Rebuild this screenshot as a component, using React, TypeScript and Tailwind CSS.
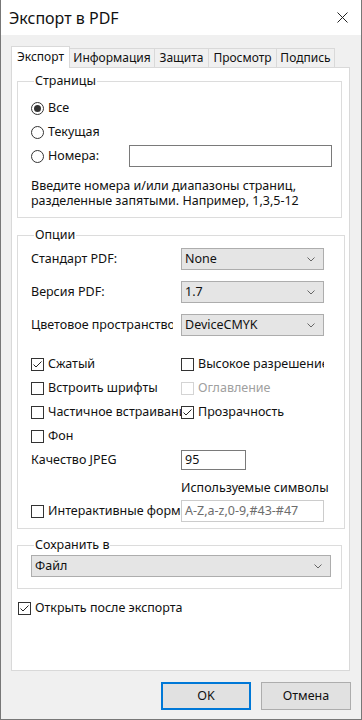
import React from "react";

const Chevron = () => (
  <svg width="8" height="5" viewBox="0 0 8 5" className="shrink-0">
    <path d="M0.5 0.5 L4 4 L7.5 0.5" fill="none" stroke="#666" strokeWidth="1" />
  </svg>
);

const Select = ({ value, className = "" }: { value: string; className?: string }) => (
  <div
    className={
      "h-[22px] bg-[#e5e5e5] border border-[#adadad] flex items-center justify-between pl-[3px] pr-[8px] " +
      className
    }
  >
    <span className="whitespace-nowrap">{value}</span>
    <Chevron />
  </div>
);

const Radio = ({ checked, label }: { checked?: boolean; label: string }) => (
  <div className="flex items-center gap-[4px]">
    <div className="w-[13px] h-[13px] rounded-full border border-[#333] flex items-center justify-center shrink-0 bg-white">
      {checked && <div className="w-[7px] h-[7px] rounded-full bg-[#333]" />}
    </div>
    <span className="whitespace-nowrap">{label}</span>
  </div>
);

const Check = ({
  checked,
  disabled,
  label,
  className = "",
}: {
  checked?: boolean;
  disabled?: boolean;
  label: string;
  className?: string;
}) => (
  <div className={"flex items-center gap-[4px] h-[24px] overflow-hidden " + className}>
    <div
      className={
        "w-[13px] h-[13px] border shrink-0 bg-white flex items-center justify-center " +
        (disabled ? "border-[#d4d4d4]" : "border-[#333]")
      }
    >
      {checked && (
        <svg width="11" height="11" viewBox="0 0 11 11">
          <path d="M1.5 5.5 L4 8 L9.5 2.5" fill="none" stroke="#222" strokeWidth="1" />
        </svg>
      )}
    </div>
    <span className={"whitespace-nowrap " + (disabled ? "text-[#a0a0a0]" : "")}>{label}</span>
  </div>
);

export default function App() {
  return (
    <div className="w-[362px] h-[720px] bg-[#f0f0f0] border-x border-b border-[#777777] flex flex-col text-[12.5px] text-[#111] font-['Noto_Sans',sans-serif] leading-[16px] overflow-hidden">
      {/* Title bar */}
      <div className="h-[35px] bg-white flex items-center justify-between pl-[8px] pr-[13px] shrink-0">
        <span className="text-[16px]">Экспорт в PDF</span>
        <svg width="11" height="11" viewBox="0 0 11 11">
          <path d="M0.5 0.5 L10.5 10.5 M10.5 0.5 L0.5 10.5" stroke="#222" strokeWidth="1" />
        </svg>
      </div>

      <div className="flex-1 flex flex-col px-[10px]">
        {/* Tabs */}
        <div className="mt-[11px] h-[21px] flex items-end text-[12px]">
          <div className="relative z-10 -mb-px h-[22px] w-[59px] bg-white border border-b-0 border-[#d9d9d9] flex items-start justify-center pt-[2px]">
            Экспорт
          </div>
          <div className="h-[19px] w-[85px] border-t border-r border-[#d9d9d9] flex items-center justify-center">
            Информация
          </div>
          <div className="h-[19px] w-[54px] border-t border-r border-[#d9d9d9] flex items-center justify-center">
            Защита
          </div>
          <div className="h-[19px] w-[68px] border-t border-r border-[#d9d9d9] flex items-center justify-center">
            Просмотр
          </div>
          <div className="h-[19px] w-[58px] border-t border-r border-[#d9d9d9] flex items-center justify-center">
            Подпись
          </div>
        </div>

        {/* Panel */}
        <div className="w-[339px] h-[604px] bg-white border border-[#d9d9d9] flex flex-col pl-[5px] pr-[7px]">
          {/* Страницы */}
          <fieldset className="mt-[5px] border border-[#dcdcdc] pl-[13px] pr-[9px] pb-[9px]">
            <legend className="ml-[3px] px-[1px]">Страницы</legend>
            <div className="mt-[7px] h-[24px] flex items-center">
              <Radio checked label="Все" />
            </div>
            <div className="h-[24px] flex items-center">
              <Radio label="Текущая" />
            </div>
            <div className="h-[24px] flex items-center">
              <Radio label="Номера:" />
              <div className="ml-auto w-[203px] h-[22px] border border-[#7a7a7a] bg-white" />
            </div>
            <div className="mt-[10px] leading-[15px] whitespace-nowrap">
              <div>Введите номера и/или диапазоны страниц,</div>
              <div>разделенные запятыми. Например, 1,3,5-12</div>
            </div>
          </fieldset>

          {/* Опции */}
          <fieldset className="mt-[9px] border border-[#dcdcdc] pl-[13px] pr-[15px] pb-[6px]">
            <legend className="ml-[3px] px-[1px]">Опции</legend>
            <div className="mt-[5px] flex flex-col gap-[11px]">
              <div className="flex items-center h-[22px]">
                <span className="w-[150px] whitespace-nowrap overflow-hidden">Стандарт PDF:</span>
                <Select value="None" className="w-[143px]" />
              </div>
              <div className="flex items-center h-[22px]">
                <span className="w-[150px] whitespace-nowrap overflow-hidden">Версия PDF:</span>
                <Select value="1.7" className="w-[143px]" />
              </div>
              <div className="flex items-center h-[22px]">
                <span className="w-[142px] mr-[8px] whitespace-nowrap overflow-hidden">Цветовое пространство</span>
                <Select value="DeviceCMYK" className="w-[143px]" />
              </div>
            </div>

            <div className="mt-[16px] grid grid-cols-[150px_143px]">
              <Check checked label="Сжатый" />
              <Check label="Высокое разрешение" />
              <Check label="Встроить шрифты" />
              <Check disabled label="Оглавление" />
              <Check label="Частичное встраивание" />
              <Check checked label="Прозрачность" />
              <Check label="Фон" />
              <div />
            </div>

            <div className="mt-[1px] flex items-center h-[22px]">
              <span className="w-[150px]">Качество JPEG</span>
              <div className="w-[65px] h-[20px] border border-[#7a7a7a] bg-white flex items-center pl-[3px]">95</div>
            </div>
            <div className="mt-[9px] h-[16px] pl-[150px] whitespace-nowrap">Используемые символы</div>
            <div className="mt-[4px] flex items-center h-[22px]">
              <Check label="Интерактивные формы" className="w-[150px]" />
              <div className="w-[143px] h-[22px] border border-[#cccccc] bg-white flex items-center pl-[3px] text-[#6d6d6d] whitespace-nowrap">
                A-Z,a-z,0-9,#43-#47
              </div>
            </div>
          </fieldset>

          {/* Сохранить в */}
          <fieldset className="mt-[8px] border border-[#dcdcdc] pl-[13px] pr-[10px] pb-[11px]">
            <legend className="ml-[3px] px-[1px]">Сохранить в</legend>
            <Select value="Файл" className="mt-[2px]" />
          </fieldset>

          <div className="mt-[11px] ml-[1px] h-[16px] flex items-center">
            <Check checked label="Открыть после экспорта" />
          </div>
        </div>

        {/* Buttons */}
        <div className="mt-[11px] flex justify-end gap-[10px]">
          <button className="w-[90px] h-[28px] bg-[#e1e1e1] border border-[#0078d7] outline outline-1 outline-[#0078d7] -outline-offset-2">
            OK
          </button>
          <button className="w-[90px] h-[28px] bg-[#e1e1e1] border border-[#adadad]">Отмена</button>
        </div>
      </div>
    </div>
  );
}
